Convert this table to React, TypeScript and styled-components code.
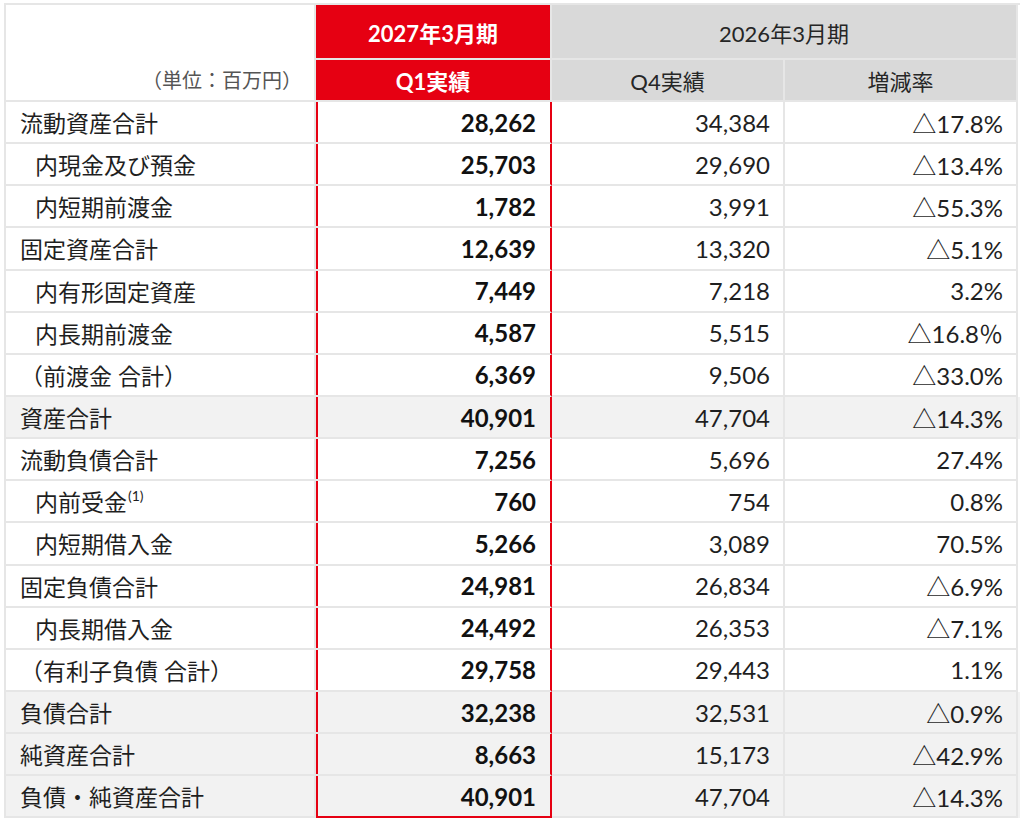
import React from "react"
import styled, { createGlobalStyle, css } from "styled-components"

const LINE = "#e6e6e6"
const RED = "#e60012"
const HEAD_GRAY = "#d9d9d9"
const SUM_GRAY = "#f2f2f2"
const TEXT = "#1f1f1f"
const COLS = "310px 236px 233px 233px"

const GlobalStyle = createGlobalStyle`
  body {
    margin: 0;
    background: #ffffff;
    font-family: Lato, "Noto Sans CJK JP", sans-serif;
    color: ${TEXT};
  }
`

const Sheet = styled.div`
  margin: 3px 0 0 4px;
  width: 1014px;
  border-top: 2px solid ${LINE};
  border-left: 2px solid ${LINE};
`

const Header = styled.div`
  display: grid;
  grid-template-columns: ${COLS};
  grid-template-rows: 55px 42px;
`

const HeadCell = styled.div<{ $tone: "blank" | "red" | "gray" }>`
  box-sizing: border-box;
  display: flex;
  align-items: center;
  justify-content: center;
  border-right: 2px solid ${LINE};
  border-bottom: 2px solid ${LINE};
  font-size: 22px;
  ${(p) =>
    p.$tone === "red" &&
    css`
      background: ${RED};
      color: #ffffff;
      font-weight: 700;
    `}
  ${(p) =>
    p.$tone === "gray" &&
    css`
      background: ${HEAD_GRAY};
      color: #262626;
    `}
`

const UnitCell = styled(HeadCell)`
  grid-row: 1 / span 2;
  align-items: flex-end;
  justify-content: flex-end;
  padding: 0 12px 6px 0;
  font-size: 20px;
  color: #555555;
`

const PeriodCell = styled(HeadCell)`
  grid-column: 3 / span 2;
`

const Row = styled.div<{ $sum?: boolean }>`
  display: grid;
  grid-template-columns: ${COLS};
  height: 42.15px;
  background: ${(p) => (p.$sum ? SUM_GRAY : "#ffffff")};
`

const Label = styled.div<{ $indent?: boolean }>`
  box-sizing: border-box;
  display: flex;
  align-items: center;
  padding-left: ${(p) => (p.$indent ? 29 : 14)}px;
  border-right: 2px solid ${LINE};
  border-bottom: 2px solid ${LINE};
  font-size: 23px;
  white-space: nowrap;
`

const Note = styled.span`
  align-self: flex-start;
  margin: 6px 0 0 1px;
  font-size: 14px;
`

const Value = styled.div<{ $current?: boolean; $last?: boolean }>`
  box-sizing: border-box;
  display: flex;
  align-items: center;
  justify-content: flex-end;
  padding-right: 13px;
  border-right: 2px solid ${LINE};
  border-bottom: 2px solid ${LINE};
  font-size: 24px;
  white-space: nowrap;
  ${(p) =>
    p.$current &&
    css`
      font-weight: 700;
      color: #111111;
      border-right-color: ${RED};
      box-shadow: inset 2px 0 0 ${RED};
      padding-right: 14px;
    `}
  ${(p) =>
    p.$current &&
    p.$last &&
    css`
      border-bottom-color: ${RED};
    `}
`

type Item = {
  label: string
  note?: string
  indent?: boolean
  sum?: boolean
  q1: string
  q4: string
  rate: string
}

const items: Item[] = [
  { label: "流動資産合計", q1: "28,262", q4: "34,384", rate: "△17.8%" },
  { label: "内現金及び預金", indent: true, q1: "25,703", q4: "29,690", rate: "△13.4%" },
  { label: "内短期前渡金", indent: true, q1: "1,782", q4: "3,991", rate: "△55.3%" },
  { label: "固定資産合計", q1: "12,639", q4: "13,320", rate: "△5.1%" },
  { label: "内有形固定資産", indent: true, q1: "7,449", q4: "7,218", rate: "3.2%" },
  { label: "内長期前渡金", indent: true, q1: "4,587", q4: "5,515", rate: "△16.8％" },
  { label: "（前渡金 合計）", q1: "6,369", q4: "9,506", rate: "△33.0%" },
  { label: "資産合計", sum: true, q1: "40,901", q4: "47,704", rate: "△14.3%" },
  { label: "流動負債合計", q1: "7,256", q4: "5,696", rate: "27.4%" },
  { label: "内前受金", note: "(1)", indent: true, q1: "760", q4: "754", rate: "0.8%" },
  { label: "内短期借入金", indent: true, q1: "5,266", q4: "3,089", rate: "70.5%" },
  { label: "固定負債合計", q1: "24,981", q4: "26,834", rate: "△6.9%" },
  { label: "内長期借入金", indent: true, q1: "24,492", q4: "26,353", rate: "△7.1%" },
  { label: "（有利子負債 合計）", q1: "29,758", q4: "29,443", rate: "1.1%" },
  { label: "負債合計", sum: true, q1: "32,238", q4: "32,531", rate: "△0.9%" },
  { label: "純資産合計", sum: true, q1: "8,663", q4: "15,173", rate: "△42.9%" },
  { label: "負債・純資産合計", sum: true, q1: "40,901", q4: "47,704", rate: "△14.3%" },
]

const App: React.FC = () => {
  return (
    <>
      <GlobalStyle />
      <Sheet>
        <Header>
          <UnitCell $tone="blank">（単位：百万円）</UnitCell>
          <HeadCell $tone="red">2027年3月期</HeadCell>
          <PeriodCell $tone="gray">2026年3月期</PeriodCell>
          <HeadCell $tone="red">Q1実績</HeadCell>
          <HeadCell $tone="gray">Q4実績</HeadCell>
          <HeadCell $tone="gray">増減率</HeadCell>
        </Header>

        {items.map((item, i) => {
          const last = i === items.length - 1
          return (
            <Row key={item.label} $sum={item.sum}>
              <Label $indent={item.indent}>
                {item.label}
                {item.note && <Note>{item.note}</Note>}
              </Label>
              <Value $current $last={last}>
                {item.q1}
              </Value>
              <Value>{item.q4}</Value>
              <Value>{item.rate}</Value>
            </Row>
          )
        })}
      </Sheet>
    </>
  )
}

export default App
